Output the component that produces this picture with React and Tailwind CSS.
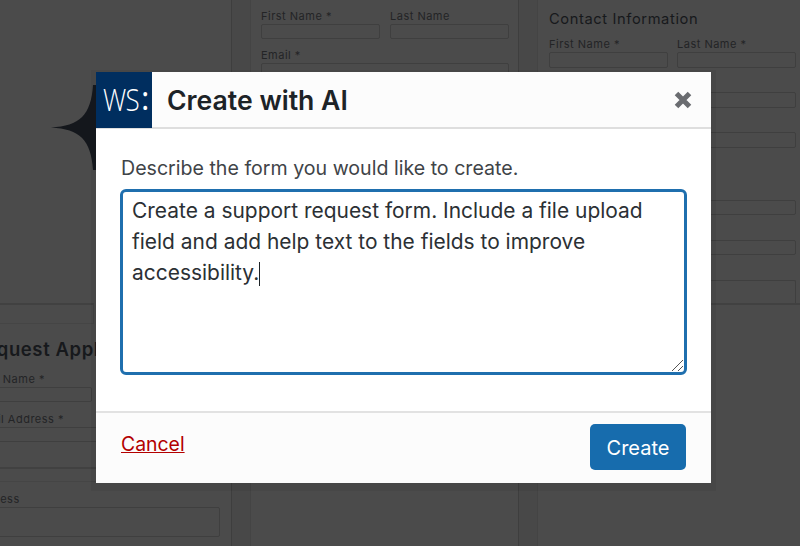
import React from 'react';

const Field = ({ label, h = 'h-[15px]', className = '' }) => (
  <div className={className}>
    <div className="text-[11px] leading-[13px] tracking-[0.5px] text-[#232426] whitespace-nowrap">{label}</div>
    <div className={`${h} mt-[1px] rounded-[2px] border border-[#3f3f3f]`} />
  </div>
);

const Box = ({ h, className = '' }) => <div className={`${h} rounded-[2px] border border-[#3f3f3f] ${className}`} />;

const Spark = () => (
  <svg width="45" height="85" viewBox="0 0 45 85" className="absolute left-[-45px] top-[13px]">
    <path d="M0 42.5 C29 41 40 30 42 0 L45 0 L45 85 L42 85 C40 55 29 44 0 42.5 Z" fill="#14171c" />
  </svg>
);

const BackgroundForms = () => (
  <div className="h-[546px] overflow-hidden grid grid-cols-[231px_1px_19px_267px_1px_19px_1fr] bg-[#4b4b4b]">
    {/* left column */}
    <div className="flex flex-col overflow-hidden">
      <div className="h-[303px]" />
      <div className="h-[21px] w-[94px] border-t-2 border-b border-r border-t-[#414141] border-b-[#454545] border-r-[#444444]" />
      <div className="flex-1 pt-[15px]">
        <div className="ml-[-76px] text-[18.5px] leading-[20px] font-semibold tracking-[0.6px] text-[#17191c] whitespace-nowrap">
          Help Request Application
        </div>
        <div className="ml-[-26px] mr-[11px]">
          <Field label="First Name *" className="mt-[14px] w-[118px]" />
          <Field label="Email Address *" className="mt-[11px]" />
          <div className="mt-[25px] ml-[26px] mr-[-11px] h-[15px] border-t-2 border-b border-t-[#414141] border-b-[#454545]" />
          <Field label="Business" h="h-[30px]" className="mt-[11px] ml-[-5px]" />
        </div>
      </div>
    </div>
    <div className="bg-[#3e3e3e]" />
    <div className="bg-[#484848] border-r border-[#444444]" />

    {/* middle column */}
    <div className="pl-[10px] pt-[10px]">
      <div className="grid grid-cols-[119px_119px] gap-x-[10px]">
        <Field label="First Name *" />
        <Field label="Last Name" />
      </div>
      <Field label="Email *" className="mt-[10px] w-[248px]" />
    </div>
    <div className="bg-[#3e3e3e]" />
    <div className="bg-[#484848] border-r border-[#444444]" />

    {/* right column */}
    <div className="pl-[11px] pt-[11px]">
      <div className="text-[14.7px] leading-[16px] tracking-[0.6px] text-[#17191c] whitespace-nowrap">Contact Information</div>
      <div className="grid grid-cols-[119px_119px] gap-x-[9px] mt-[11px]">
        <Field label="First Name *" h="h-[16px]" />
        <Field label="Last Name *" h="h-[16px]" />
      </div>
      <div className="w-[247px]">
        <Box h="h-[16px]" className="mt-[24px]" />
        <Box h="h-[16px]" className="mt-[24px]" />
        <Box h="h-[15px]" className="mt-[52px]" />
        <Box h="h-[15px]" className="mt-[25px]" />
        <Box h="h-[23px]" className="mt-[25px] rounded-b-none border-b-0" />
      </div>
      <div className="ml-[-11px] border-t-2 border-[#414141]" />
    </div>
  </div>
);

export default function App() {
  return (
    <div className="relative w-[800px] h-[546px] overflow-hidden font-['Inter',sans-serif]">
      <BackgroundForms />

      <div className="absolute left-[96px] top-[72px] w-[615px] h-[411px] bg-white flex flex-col shadow-[0_3px_0_5px_rgba(0,0,0,0.05)]">
        <Spark />
        <div className="relative flex items-center h-[57px] bg-[#fcfcfc] border-b-2 border-[#dedede]">
          <div className="w-[56px] h-[56px] shrink-0 bg-[#002e5f] flex items-center pl-[7px] text-white text-[31px] font-['Open_Sans',sans-serif]">
            <span className="inline-block w-[36px] origin-left scale-x-[0.84] font-light tracking-[-1px]">WS</span>
            <span className="ml-[2px] text-[32px] mt-[-3px]">:</span>
          </div>
          <div className="ml-[15px] text-[26.6px] leading-[32px] font-semibold text-[#1d2327]">Create with AI</div>
          <svg width="20" height="20" viewBox="0 0 20 20" className="ml-auto mr-[18px]">
            <path d="M3.5 3.5 L16.5 16.5 M16.5 3.5 L3.5 16.5" stroke="#6a6c70" strokeWidth="5" />
          </svg>
        </div>

        <div className="flex-1 px-[25px] pt-[27px]">
          <div className="text-[19.6px] leading-[24px] text-[#3f4448] whitespace-nowrap">Describe the form you would like to create.</div>
          <div className="relative mt-[9px] mx-[-1px] h-[186px] rounded-[6px] border-[3px] border-[#1f6fae] px-[9px] pt-[3px] text-[20.95px] leading-[31px] text-[#2b3034]">
            Create a support request form. Include a file upload field and add help text to the fields to improve accessibility.
            <span className="inline-block w-[1px] h-[24px] bg-[#1d2327] align-[-6px]" />
            <svg width="13" height="13" viewBox="0 0 13 13" className="absolute right-0 bottom-0">
              <path d="M1 12 L12 1 M7 12 L12 7" stroke="#555555" strokeWidth="1" />
            </svg>
          </div>
        </div>

        <div className="h-[72px] bg-[#fcfcfc] border-t-2 border-[#e2e2e2] flex items-center justify-between px-[25px] pb-[2px]">
          <a className="text-[19.4px] leading-[24px] text-[#b30000] underline mt-[-7px]">Cancel</a>
          <button className="w-[96px] h-[46px] pt-[2px] rounded-[5px] bg-[#176cad] text-white text-[20px]">Create</button>
        </div>
      </div>
    </div>
  );
}
